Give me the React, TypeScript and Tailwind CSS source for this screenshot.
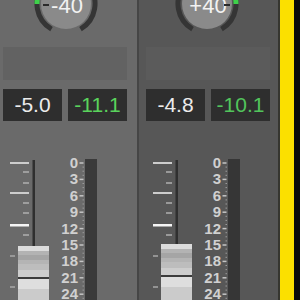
import React from 'react';

const SCALE = ['0', '3', '6', '9', '12', '15', '18', '21', '24'];
const FONT = { fontFamily: '"Liberation Sans", Arial, sans-serif' };

const pt = (cx: number, cy: number, r: number, deg: number) => {
  const a = (deg * Math.PI) / 180;
  return `${(cx + r * Math.sin(a)).toFixed(2)} ${(cy - r * Math.cos(a)).toFixed(2)}`;
};

function Knob({ label, angle, cx }: { label: string; angle: number; cx: number }) {
  const cy = 4;
  const r = 29;
  const from = Math.min(angle, 0);
  const to = Math.max(angle, 0);
  return (
    <svg width="141" height="40" className="block shrink-0">
      <path d={`M ${pt(cx, cy, r, -150)} A ${r} ${r} 0 1 1 ${pt(cx, cy, r, 150)}`} fill="none" stroke="#353535" strokeWidth="5" />
      <path d={`M ${pt(cx, cy, r, from)} A ${r} ${r} 0 0 1 ${pt(cx, cy, r, to)}`} fill="none" stroke="#3ed14a" strokeWidth="5" />
      <circle cx={cx} cy={cy} r="25" fill="#8a8a8a" />
      <text x={cx + 1} y="12.5" textAnchor="middle" fontSize="22" fill="#f2f2f2" style={FONT}>
        {label}
      </text>
      <path d={`M ${pt(cx, cy + 1, 17, angle)} L ${pt(cx, cy + 1, 23, angle)}`} stroke="#2a2a2a" strokeWidth="2" />
    </svg>
  );
}

function Fader({ capTop }: { capTop: number }) {
  return (
    <div className="relative w-[60px] h-[141px] shrink-0">
      <svg width="60" height="141" className="block">
        <rect x="36.5" y="1" width="2.5" height="140" fill="#2f2f2f" />
        {[4, 34].map((y) => (
          <rect key={y} x="14" y={y - 1} width="19" height="2" fill="#cdcdcd" />
        ))}
        <rect x="14" y="65" width="19" height="2.5" fill="#f5f5f5" />
        {[13, 24, 44, 54, 76].map((y) => (
          <rect key={y} x="27" y={y - 0.75} width="6" height="1.5" fill="#b0b0b0" />
        ))}
        {[97, 128].map((y) => (
          <rect key={y} x="14" y={y - 0.75} width="5" height="1.5" fill="#a8a8a8" />
        ))}
      </svg>
      <div className="absolute left-[22px] w-[31px] bottom-0 flex flex-col" style={{ top: capTop }}>
        <div className="h-[5px] bg-[#dcdcdc]" />
        <div className="h-[4px] bg-[#b3b3b3]" />
        <div className="h-[5px] bg-[#a5a5a5]" />
        <div className="h-[4px] bg-[#b4b4b4]" />
        <div className="h-[6px] bg-[#bdbdbd]" />
        <div className="h-[7px] bg-[#cdcdcd]" />
        <div className="h-[2px] bg-[#3c3c3c]" />
        <div className="h-[10px] bg-[#dedede]" />
        <div className="flex-1 bg-[#cbcbcb]" />
      </div>
    </div>
  );
}

function Scale() {
  const dots: number[] = [];
  for (let i = 0; i < 9; i++) {
    for (let k = 1; k < 4; k++) dots.push(4 + i * 16.4 + k * 4.1);
  }
  return (
    <>
      <div className="w-[22px] shrink-0 -mt-[4px] flex flex-col items-end text-[15px] leading-[16.4px] font-bold text-[#d0d0d0]" style={FONT}>
        {SCALE.map((n) => (
          <span key={n}>{n}</span>
        ))}
      </div>
      <svg width="7" height="141" className="block shrink-0">
        {SCALE.map((n, i) => (
          <rect key={n} x="1.5" y={4 + i * 16.4 - 0.75} width="4" height="1.5" fill="#c4c4c4" />
        ))}
        {dots.map((y) => (
          <rect key={y} x="4.5" y={y - 0.5} width="1.5" height="1" fill="#9a9a9a" />
        ))}
      </svg>
    </>
  );
}

function Channel({ pan, angle, knobX, a, b, capTop, bg, box, meter, green }: {
  pan: string; angle: number; knobX: number; a: string; b: string; capTop: number;
  bg: string; box: string; meter: string; green: string;
}) {
  return (
    <div className="w-[141px] h-[300px] flex flex-col shrink-0" style={{ backgroundColor: bg }}>
      <Knob label={pan} angle={angle} cx={knobX} />
      <div className="mt-[7px] ml-[7px] w-[124px] h-[33px]" style={{ backgroundColor: box }} />
      <div className="mt-[9px] ml-[7px] flex gap-[6px] text-[21px] text-[#ececec]" style={FONT}>
        <div className="w-[59px] h-[32px] bg-[#2e2e2e] flex items-center justify-center">{a}</div>
        <div className="w-[59px] h-[32px] bg-[#2e2e2e] flex items-center justify-center" style={{ color: green }}>{b}</div>
      </div>
      <div className="mt-[38px] flex h-[141px]">
        <Fader capTop={capTop} />
        <Scale />
        <div className="w-[12px] h-full shrink-0" style={{ backgroundColor: meter }} />
      </div>
    </div>
  );
}

export default function App() {
  return (
    <div className="w-[300px] h-[300px] flex overflow-hidden bg-black">
      <div className="w-[137px] h-full overflow-hidden shrink-0">
        <div className="-ml-[4px]">
          <Channel pan="-40" angle={-90} knobX={70} a="-5.0" b="-11.1" capTop={87}
            bg="#6a6a6a" box="#626262" meter="#3a3a3a" green="#5ad35c" />
        </div>
      </div>
      <div className="w-[2px] h-full bg-[#464646] shrink-0" />
      <div className="w-[139px] h-full overflow-hidden shrink-0">
        <Channel pan="+40" angle={90} knobX={68} a="-4.8" b="-10.1" capTop={85}
          bg="#575757" box="#5b5b5b" meter="#363636" green="#52c45c" />
      </div>
      <div className="w-[2px] h-full bg-[#363630] shrink-0" />
      <div className="w-[14px] h-full bg-[#fbe000] shrink-0" />
      <div className="flex-1 h-full bg-[#0a0a0a]" />
    </div>
  );
}
